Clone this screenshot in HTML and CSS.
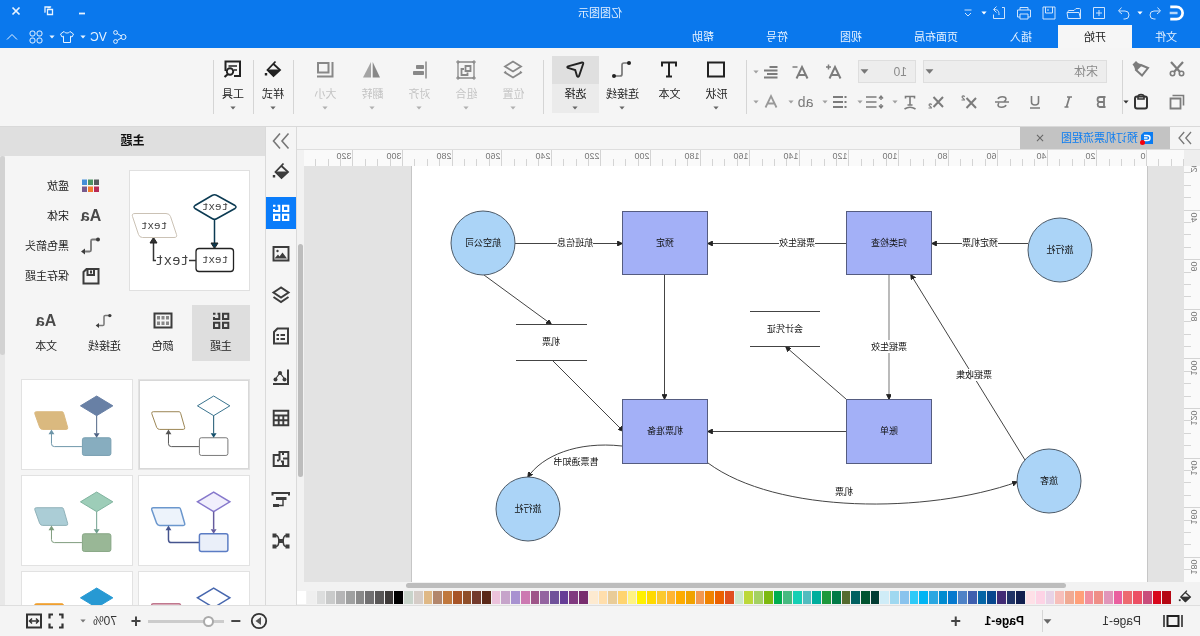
FILE: index.html
```html
<!DOCTYPE html>
<html lang="zh-CN">
<head>
<meta charset="utf-8">
<title>亿图图示</title>
<meta name="viewport" content="width=device-width, initial-scale=1">
<link rel="stylesheet" href="styles.css">
</head>
<body>
<svg class="sprite" aria-hidden="true">
  <symbol id="arrow" viewBox="0 0 8 8"><path d="M0.500 2h7L4 6z" fill="currentColor"/></symbol>
  <symbol id="logo" viewBox="0 0 16 16"><path d="M14 2.500H8.500a5.500 5.500 0 0 0 0 11H14" fill="none" stroke="currentColor" stroke-width="2.400"/><path d="M7.500 8h7" stroke="currentColor" stroke-width="2.200" opacity=".7"/></symbol>
  <symbol id="undo" viewBox="0 0 16 16"><path d="M5.500 2.500 2.500 6l3.500 3M3 6h6a4 4 0 0 1 0 8H7.500"/></symbol>
  <symbol id="redo" viewBox="0 0 16 16"><path d="m10.500 2.500 3 3.500-3.500 3M13 6H7a4 4 0 0 0 0 8h1.500"/></symbol>
  <symbol id="new" viewBox="0 0 16 16"><path d="M2.500 2.500h11v11h-11zM8 5v6M5 8h6"/></symbol>
  <symbol id="open" viewBox="0 0 16 16"><path d="M1.500 13.500v-9q0-1 1-1H6l2 2h5q1 0 1 1v1M1.500 13.500 3 7.500h12l-1 6z"/></symbol>
  <symbol id="save" viewBox="0 0 16 16"><path d="M2 2h12v12H2zM4.500 2v6h7V2M9 4v2"/></symbol>
  <symbol id="print" viewBox="0 0 16 16"><path d="M4 5V2.500h8V5M4 12H1.500V5h13v7H12M4 9h8v5H4z"/></symbol>
  <symbol id="export" viewBox="0 0 16 16"><path d="M5 2.500H2.500v11h11V9.500M8 10c0-4 1-5.500 5-5.500M10.500 1.500l3 3-3 3"/></symbol>
  <symbol id="custom" viewBox="0 0 16 16"><path d="M4.500 5h7M5 8l3 3 3-3"/></symbol>
  <symbol id="share" viewBox="0 0 16 16"><circle cx="4.500" cy="8" r="2.500"/><circle cx="12.500" cy="3.500" r="1.900"/><circle cx="12.500" cy="12.500" r="1.900"/><path d="m6.800 7 4-2.500M6.800 9l4 2.500"/></symbol>
  <symbol id="shirt" viewBox="0 0 16 16"><path d="M5 2.500 1.500 5 3 8l1.500-.8v6.300h7V7.200L13 8l1.500-3L11 2.500c-1 2-5 2-6 0z"/></symbol>
  <symbol id="clover" viewBox="0 0 16 16"><rect x="2" y="2" width="5" height="5" rx="2"/><rect x="9" y="2" width="5" height="5" rx="2"/><rect x="2" y="9" width="5" height="5" rx="2"/><rect x="9" y="9" width="5" height="5" rx="2"/></symbol>
  <symbol id="chev-up" viewBox="0 0 16 16"><path d="m3 10.500 5-5 5 5"/></symbol>
  <symbol id="win-min" viewBox="0 0 16 16"><path d="M5 10.500h6" stroke-width="1.800"/></symbol>
  <symbol id="win-restore" viewBox="0 0 16 16"><path d="M6.500 4.500V4H12v5h-.5M4.500 6.500h5v5h-5zM6.500 4.500h3" stroke-width="1.300"/></symbol>
  <symbol id="win-close" viewBox="0 0 16 16"><path d="m4.500 4.500 7 7M11.500 4.500l-7 7" stroke-width="1.700"/></symbol>
  <symbol id="tab-close" viewBox="0 0 16 16"><path d="m4.500 4.500 7 7M11.500 4.500l-7 7" stroke-width="1.200"/></symbol>

  <symbol id="cut" viewBox="0 0 20 20"><path d="M4 3 13 13M16 3 7 13" stroke-width="2.200"/><circle cx="5.500" cy="14.500" r="2.200" stroke-width="1.600"/><circle cx="14.500" cy="14.500" r="2.200" stroke-width="1.600"/></symbol>
  <symbol id="brush" viewBox="0 0 20 20"><path d="m3 9 7-3 5 5-6 5.500z" stroke-width="2"/><path d="m9.500 5.500 6 6 1.500-4 1.500-2L15 2l-2 2z" fill="currentColor" stroke="none"/></symbol>
  <symbol id="copy" viewBox="0 0 20 20"><path d="M6.500 6.500h10v10h-10z" stroke-width="1.800"/><path d="M3.500 13.500v-10h11" stroke-width="1.600"/></symbol>
  <symbol id="paste" viewBox="0 0 20 20"><rect x="4" y="4.500" width="12" height="12" rx="2" stroke-width="2"/><path d="M7 7V5a3 2.500 0 0 1 6 0v2z" stroke-width="1.600"/></symbol>
  <symbol id="f-bold" viewBox="0 0 20 20"><path d="M7 5h4a2.400 2.400 0 0 1 0 5H7zM7 10h4.500a2.600 2.600 0 0 1 0 5H7zM5.500 5h2M5.500 15h2" stroke-width="1.800"/></symbol>
  <symbol id="f-italic" viewBox="0 0 20 20"><path d="M6 5h5M9.500 15h4M8.500 5l3 10" stroke-width="1.700"/></symbol>
  <symbol id="f-under" viewBox="0 0 20 20"><path d="M6.500 4v6a3.500 3 0 0 0 7 0V4M5 16h10" stroke-width="1.600"/></symbol>
  <symbol id="f-strike" viewBox="0 0 20 20"><path d="M14 7c-1-3-8-3-8 0 0 1.200 1 2 2 2.500M6 13c1 3 8 3 8 0 0-1-.4-1.500-1-2M3 10h14" stroke-width="1.500"/></symbol>
  <symbol id="f-sup" viewBox="0 0 20 20"><path d="m3 6 9.500 10M12.500 6 3 16" stroke-width="2"/><path d="M14.500 5c.4-1.500 2.500-1.400 2.500 0 0 1-2.500 1.500-2.500 3H17.500" stroke-width="1.100"/></symbol>
  <symbol id="f-sub" viewBox="0 0 20 20"><path d="m3 5 9.500 10M12.500 5 3 15" stroke-width="2"/><path d="M14.500 13c.4-1.500 2.500-1.400 2.500 0 0 1-2.500 1.500-2.500 3H17.500" stroke-width="1.100"/></symbol>
  <symbol id="f-path" viewBox="0 0 20 20"><path d="M5.500 6.500v-2h9v2M10 4.500V13M7.500 13h5M4.500 17q5.500-3.500 11 0" stroke-width="1.600"/></symbol>
  <symbol id="f-line" viewBox="0 0 20 20"><path d="M8.500 5H19M8.500 10H19M8.500 15H19" stroke-width="1.700"/><path d="M4 5v3M4 12v3M2 6.500 4 4l2 2.500M2 13.500 4 16l2-2.500" stroke-width="1.400"/></symbol>
  <symbol id="f-list" viewBox="0 0 20 20"><path d="M7 5H17M7 10H17M7 15H17" stroke-width="1.800"/><path d="M3.500 5h2M3.500 10h2M3.500 15h2" stroke-width="1.800"/></symbol>
  <symbol id="f-color" viewBox="0 0 20 20"><path d="M4.500 15.500 10 4l5.500 11.500M6.500 11.500h7" stroke-width="1.800"/></symbol>
  <symbol id="f-big" viewBox="0 0 20 20"><path d="M3.500 16.500 9 5l5.500 11.500M5.500 13h7" stroke-width="2"/><path d="M15.500 2.500v5M13 5h5" stroke-width="1.500"/></symbol>
  <symbol id="f-small" viewBox="0 0 20 20"><path d="M3.500 16.500 9 5l5.500 11.500M5.500 13h7" stroke-width="2"/><path d="M13.500 5h5" stroke-width="1.500"/></symbol>
  <symbol id="f-align" viewBox="0 0 20 20"><path d="M3.500 5H11.500M3.500 8.500H17M3.500 12H14M3.500 15.500H17" stroke-width="1.800"/></symbol>

  <symbol id="r-shape" viewBox="0 0 24 24"><path d="M4 4.500h16v14H4z" stroke-width="2"/></symbol>
  <symbol id="r-text" viewBox="0 0 24 24"><path d="M5 8.500v-4h14v4M12 4.500v14M9 18.500h6" stroke-width="2"/></symbol>
  <symbol id="r-conn" viewBox="0 0 24 24"><path d="M5 5h5q2 0 2 2v9q0 2 2 2h5" stroke="#777" stroke-width="1.700"/><circle cx="5" cy="5" r="2" fill="currentColor" stroke="none"/><circle cx="20" cy="18" r="2" fill="currentColor" stroke="none"/></symbol>
  <symbol id="r-arrowconn" viewBox="0 0 24 24"><path d="M5 5.500h5.500a1.500 1.500 0 0 1 1.500 1.500v9a1.500 1.500 0 0 0 1.500 1.500H19" stroke="#777" stroke-width="1.800"/><circle cx="5" cy="5.500" r="2" fill="currentColor" stroke="none"/><path d="m18 14.500 4 3-4 3z" fill="currentColor" stroke="none"/></symbol>
  <symbol id="r-select" viewBox="0 0 24 24"><path d="M5 4.500q-1.500-.2-1.200 1.200L8 18q1 1.500 2 0l1.800-6L19 10q1.500-1 0-1.700z" stroke-width="1.900"/></symbol>
  <symbol id="r-layers" viewBox="0 0 24 24"><path d="m12 3.500 8 5-8 5-8-5zM5 13.500l-1 1 8 5 8-5-1-1" stroke-width="1.800"/></symbol>
  <symbol id="r-group" viewBox="0 0 24 24"><path d="M4 4h16v16H4z" stroke-width="1.300"/><path d="M7.500 8h5v5h-5zM14 11h2.500v6h-6V14.500" stroke-width="1.800"/><path d="M3 3h2v2H3zM19 3h2v2h-2zM3 19h2v2H3zM19 19h2v2h-2z" stroke-width="1"/></symbol>
  <symbol id="r-aligned" viewBox="0 0 24 24"><path d="M5 3.500v17" stroke-width="1.500"/><path d="M7.500 7.500h7v3h-7zM7.500 13.500h10v3h-10z" fill="currentColor"/></symbol>
  <symbol id="r-flip" viewBox="0 0 24 24"><path d="M11.300 4v15.500H4z" fill="currentColor" stroke="none"/><path d="M13 4v15.500h8z" fill="currentColor" opacity=".75" stroke="none"/></symbol>
  <symbol id="r-size" viewBox="0 0 24 24"><path d="M8.500 5h10.500v9.500H8.500z" stroke-width="2"/><path d="M4.500 4v14.500H20" stroke-width="2"/></symbol>
  <symbol id="r-bucket" viewBox="0 0 24 24"><path d="M9.500 3.500 17.500 12l-6 6L5 12l6.500-6" stroke-width="1.800"/><path d="M5 12h12.500l-6 6.500z" fill="currentColor"/><path d="M19 15v2.500" stroke-width="2.400"/></symbol>
  <symbol id="r-tools" viewBox="0 0 24 24"><path d="M11 18H5V3.500h14.500V13" stroke-width="2"/><path d="M8 8h8.500M8 12h3" stroke-width="1.500"/><circle cx="15" cy="13.500" r="3.200" stroke-width="1.900"/><path d="m17 16 3.500 3" stroke-width="2.200"/></symbol>

  <symbol id="s-grid" viewBox="0 0 20 20"><path d="M2.700 2.700h5.300v5.300H2.700zM2.700 11.700h5.300V17H2.700zM11.700 11.700H17V17h-5.300zM13.500 2.700h-1.800v5.300H17V6M15.500 2.700h2.500" stroke-width="2"/></symbol>
  <symbol id="s-image" viewBox="0 0 20 20"><path d="M2.500 3h15v13.500h-15z" stroke-width="1.900"/><path d="m4 14.500 4.500-6 3 4 1.500-2 3.500 4z" fill="currentColor" stroke="none"/><circle cx="13.500" cy="7" r="1.200" fill="currentColor" stroke="none"/></symbol>
  <symbol id="s-layers" viewBox="0 0 20 20"><path d="m10 2.500 7.500 5L10 12.500l-7.500-5zM2.500 12 10 17l7.500-5" stroke-width="2"/></symbol>
  <symbol id="s-doc" viewBox="0 0 20 20"><path d="M3 2.500h10.500L17 6v11.500H3z" stroke-width="2"/><path d="M6 9h4.500M12 9h2.500M6 13h4.500M12 13h2.500" stroke-width="1.800"/></symbol>
  <symbol id="s-chart" viewBox="0 0 20 20"><path d="M3 2.500V17h15" stroke-width="2"/><path d="M6 12.500 11 6l5 6.500" stroke-width="1.200"/><circle cx="11" cy="6" r="2.100" fill="currentColor" stroke="none"/><circle cx="6.500" cy="12.500" r="2" fill="currentColor" stroke="none"/><circle cx="15.500" cy="12.500" r="2" fill="currentColor" stroke="none"/></symbol>
  <symbol id="s-table" viewBox="0 0 20 20"><path d="M2.700 2.700h14.600v14.600H2.700zM3 7.500h14M3 12.300h14M7.700 7.500V17M12.300 7.500V17" stroke-width="1.900"/></symbol>
  <symbol id="s-plan" viewBox="0 0 20 20"><path d="M2.700 3h8.800v3h5.800v11H2.700zM3 9.500h5M8 3v3M11.500 6v5.500M12 11.500h2M8 17v-4.500h2" stroke-width="2"/></symbol>
  <symbol id="s-gantt" viewBox="0 0 20 20"><path d="M2 5.500V3h16.500v2.500" stroke-width="2"/><path d="M4.500 8.500H15M12 15.500h6" stroke-width="3"/><path d="M8 9v6.500h4" stroke-width="1.400"/></symbol>
  <symbol id="s-mind" viewBox="0 0 20 20"><path d="M1.500 4.500h4M1.500 15.500h4M14.500 4.500h4M14.500 15.500h4M7.500 10h5" stroke-width="4"/><path d="M5 4.500c4 0 3.500 11 0 11M15 4.500c-4 0-3.500 11 0 11" stroke-width="1.500"/></symbol>
  <symbol id="s-palette" viewBox="0 0 20 20"><path d="M1.500 2.500h17v14h-17z" stroke-width="2"/><path d="M4 5h3v3.500H4zM8.500 5h3v3.500h-3zM13 5h3v3.500h-3zM4 10.500h3V14H4zM8.500 10.500h3V14h-3zM13 10.500h3V14h-3z" fill="#888" stroke="none"/></symbol>
  <symbol id="s-save" viewBox="0 0 24 24"><path d="M4.500 5h12L19.500 8v11.500h-15zM9 5v6h6.500V5M12 6.500v3" stroke-width="2"/></symbol>
  <symbol id="collapse" viewBox="0 0 20 20"><path d="m2.500 2.500 6.500 7.500-6.500 7.500M11 2.500l6.500 7.500-6.500 7.500" stroke-width="1.600"/></symbol>
  <symbol id="b-pages" viewBox="0 0 20 20"><path d="M4.500 5h11v10h-11z" stroke-width="2"/><path d="M1 4v12M19 4v12" stroke-width="1.500"/></symbol>
  <symbol id="b-play" viewBox="0 0 20 20"><circle cx="10" cy="10" r="7.200" stroke-width="1.800"/><path d="m8 6 5.500 4L8 14z" fill="#555" stroke="none"/></symbol>
  <symbol id="b-full" viewBox="0 0 20 20"><path d="M3.500 7.500v-4H7M13 3.500h3.500v4M16.500 12.500v4H13M7 16.500H3.500v-4" stroke-width="2.200"/></symbol>
  <symbol id="b-fit" viewBox="0 0 20 20"><path d="M3 3.500h14v13H3z" stroke-width="2"/><path d="M6 10h8M8 7.500 5.500 10 8 12.500M12 7.500l2.500 2.500-2.500 2.500" stroke-width="1.500"/></symbol>

  <symbol id="theme" viewBox="0 0 112 92">
    <path class="t-diamond" d="m36 17 16.500 10-16.500 10-16.500-10z"/>
    <path class="t-para" d="M71 33h26.500q2 0 1.500 2L94 49q-1 2-3 2H67q-2 0-1.500-2l4-14q.5-2 1.500-2z"/>
    <rect class="t-box" x="21.500" y="59.500" width="29" height="18" rx="2"/>
    <path class="t-line1" d="M36 37v18"/><path class="t-head1" d="M33 55h6L36 59.500z"/>
    <path class="t-line2" d="M51 68.500h28q3 0 3-3V55"/><path class="t-head2" d="M79 56h6L82 51z"/>
  </symbol>
</svg>

<div class="app">
  <header class="top">
    <div class="titlebar">
      <div class="lead">
        <svg class="logo"><use href="#logo"/></svg>
        <button class="qb" aria-label="撤销"><svg class="i16"><use href="#undo"/></svg></button>
        <button class="qa" aria-label="撤销列表"><svg class="arr"><use href="#arrow"/></svg></button>
        <button class="qb" aria-label="重做"><svg class="i16"><use href="#redo"/></svg></button>
        <button class="qb" aria-label="新建"><svg class="i16"><use href="#new"/></svg></button>
        <button class="qb" aria-label="打开"><svg class="i16"><use href="#open"/></svg></button>
        <button class="qb" aria-label="保存"><svg class="i16"><use href="#save"/></svg></button>
        <button class="qb" aria-label="打印"><svg class="i16"><use href="#print"/></svg></button>
        <button class="qb" aria-label="导出"><svg class="i16"><use href="#export"/></svg></button>
        <button class="qa" aria-label="导出选项"><svg class="arr"><use href="#arrow"/></svg></button>
        <button class="qb" aria-label="自定义"><svg class="i16"><use href="#custom"/></svg></button>
      </div>
      <h1 class="title">亿图图示</h1>
      <div class="window">
        <button class="wb" aria-label="最小化"><svg class="i16"><use href="#win-min"/></svg></button>
        <button class="wb" aria-label="还原"><svg class="i16"><use href="#win-restore"/></svg></button>
        <button class="wb" aria-label="关闭"><svg class="i16"><use href="#win-close"/></svg></button>
      </div>
    </div>
    <nav class="menubar">
      <button class="menu file">文件</button><button class="menu active">开始</button><button class="menu">插入</button><button class="menu">页面布局</button><button class="menu">视图</button><button class="menu">符号</button><button class="menu">帮助</button>
      <div class="account">
        <button aria-label="分享"><svg class="i16"><use href="#share"/></svg></button>
        <button class="vc">VC<svg class="arr"><use href="#arrow"/></svg></button>
        <button aria-label="皮肤"><svg class="i16"><use href="#shirt"/></svg><svg class="arr"><use href="#arrow"/></svg></button>
        <button aria-label="应用"><svg class="i16"><use href="#clover"/></svg></button>
        <button class="hide" aria-label="收起"><svg class="i16"><use href="#chev-up"/></svg></button>
      </div>
    </nav>
  </header>

  <div class="ribbon">
    <div class="group clip">
      <button aria-label="剪切"><svg class="i20"><use href="#cut"/></svg></button>
      <button aria-label="格式刷"><svg class="i20"><use href="#brush"/></svg></button>
      <button aria-label="复制"><svg class="i20"><use href="#copy"/></svg></button>
      <button class="dark" aria-label="粘贴"><svg class="i20"><use href="#paste"/></svg><svg class="arr"><use href="#arrow"/></svg></button>
    </div>
    <div class="group font">
      <div class="row first">
        <div class="pick family"><select aria-label="字体"><option>宋体</option></select><svg class="arr big"><use href="#arrow"/></svg></div>
        <div class="pick size"><select aria-label="字号"><option>10</option></select><svg class="arr big"><use href="#arrow"/></svg></div>
        <button class="fb" aria-label="增大字号"><svg class="i20"><use href="#f-big"/></svg></button>
        <button class="fb" aria-label="减小字号"><svg class="i20"><use href="#f-small"/></svg></button>
        <button class="split last" aria-label="对齐方式"><svg class="i20"><use href="#f-align"/></svg><svg class="arr"><use href="#arrow"/></svg></button>
      </div>
      <div class="row">
        <button class="fb" aria-label="粗体"><svg class="i20"><use href="#f-bold"/></svg></button>
        <button class="fb" aria-label="斜体"><svg class="i20"><use href="#f-italic"/></svg></button>
        <button class="fb" aria-label="下划线"><svg class="i20"><use href="#f-under"/></svg></button>
        <button class="fb" aria-label="删除线"><svg class="i20"><use href="#f-strike"/></svg></button>
        <button class="fb" aria-label="上标"><svg class="i20"><use href="#f-sup"/></svg></button>
        <button class="fb" aria-label="下标"><svg class="i20"><use href="#f-sub"/></svg></button>
        <button class="split" aria-label="文本路径"><svg class="i20"><use href="#f-path"/></svg><svg class="arr"><use href="#arrow"/></svg></button>
        <button class="split" aria-label="行距"><svg class="i20"><use href="#f-line"/></svg><svg class="arr"><use href="#arrow"/></svg></button>
        <button class="split" aria-label="项目符号"><svg class="i20"><use href="#f-list"/></svg><svg class="arr"><use href="#arrow"/></svg></button>
        <button class="split"><span class="ab">ab</span><svg class="arr"><use href="#arrow"/></svg></button>
        <button class="split light" aria-label="字体颜色"><svg class="i20"><use href="#f-color"/></svg><svg class="arr"><use href="#arrow"/></svg></button>
      </div>
    </div>
    <div class="group tools">
      <button class="tool"><svg class="i24"><use href="#r-shape"/></svg>形状<svg class="arr"><use href="#arrow"/></svg></button>
      <button class="tool"><svg class="i24"><use href="#r-text"/></svg>文本</button>
      <button class="tool"><svg class="i24"><use href="#r-conn"/></svg>连接线<svg class="arr"><use href="#arrow"/></svg></button>
      <button class="tool on"><svg class="i24"><use href="#r-select"/></svg>选择<svg class="arr"><use href="#arrow"/></svg></button>
    </div>
    <div class="group tools off">
      <button class="tool"><svg class="i24"><use href="#r-layers"/></svg>位置<svg class="arr"><use href="#arrow"/></svg></button>
      <button class="tool"><svg class="i24"><use href="#r-group"/></svg>组合<svg class="arr"><use href="#arrow"/></svg></button>
      <button class="tool"><svg class="i24"><use href="#r-aligned"/></svg>对齐<svg class="arr"><use href="#arrow"/></svg></button>
      <button class="tool"><svg class="i24"><use href="#r-flip"/></svg>翻转<svg class="arr"><use href="#arrow"/></svg></button>
      <button class="tool"><svg class="i24"><use href="#r-size"/></svg>大小<svg class="arr"><use href="#arrow"/></svg></button>
    </div>
    <div class="group single"><button class="tool"><svg class="i24"><use href="#r-bucket"/></svg>样式<svg class="arr"><use href="#arrow"/></svg></button></div>
    <div class="group single"><button class="tool"><svg class="i24"><use href="#r-tools"/></svg>工具<svg class="arr"><use href="#arrow"/></svg></button></div>
  </div>

  <div class="body">
    <main class="main">
      <div class="tabs">
        <button class="fold" aria-label="展开"><svg class="i16"><use href="#collapse"/></svg></button>
        <div class="doc">
          <svg class="docicon" viewBox="0 0 14 14"><path d="M1 1h9l3 3v9H1z" fill="#0a7cf2"/><path d="M10 4.500H6.500a2.500 2.500 0 0 0 0 5H10M6.500 7H10" fill="none" stroke="#fff" stroke-width="1.400"/><circle cx="11.500" cy="11.500" r="2.500" fill="#f5000c"/></svg>
          <a href="#doc">预订机票流程图</a>
          <button class="close" aria-label="关闭"><svg class="i14"><use href="#tab-close"/></svg></button>
        </div>
      </div>
      <div class="work">
        <div class="corner"></div>
        <svg class="ruler-h" id="rulerH"></svg>
        <svg class="ruler-v" id="rulerV"></svg>
        <div class="canvas">
          <svg class="page" id="doc">
            <defs>
              <marker id="tip" viewBox="0 0 6 6" refX="5.500" refY="3" markerWidth="5" markerHeight="5" markerUnits="userSpaceOnUse" orient="auto"><path d="M0 0l6 3-6 3z" fill="#222"/></marker>
            </defs>
            <g class="edge">
              <path d="M119 77.500H215"/><path d="M300 77.500H439"/><path d="M632 77.500H525"/>
              <path class="soft" d="M258 108V233"/><path d="M482.500 108V233"/><path d="M300 265.500H439"/>
              <path d="M301 233 361 181"/><path d="M122 294 236 109"/>
              <path d="M663 109 596 158"/><path d="M595 194 524 265"/>
              <path d="M525 280C570 275 605 290 619 311"/><path d="M439 297C370 348 220 348 130 316"/>
            </g>
            <g class="store"><path d="M327 145.500h70M327 180.500h70M560 158.500h71M560 194.500h71"/></g>
            <g class="proc">
              <rect x="215.500" y="45.500" width="85" height="63"/><rect x="439.500" y="45.500" width="85" height="63"/>
              <rect x="215.500" y="233.500" width="85" height="64"/><rect x="439.500" y="233.500" width="85" height="64"/>
            </g>
            <g class="ent">
              <circle cx="87" cy="84" r="32"/><circle cx="664" cy="77" r="32"/><circle cx="98" cy="315" r="32"/><circle cx="619" cy="343" r="32"/>
            </g>
            <g class="gap">
              <rect x="149" y="71" width="36" height="13"/><rect x="332" y="71" width="36" height="13"/><rect x="554" y="71" width="36" height="13"/>
              <rect x="240" y="174" width="36" height="13"/><rect x="155" y="203" width="36" height="12"/>
            </g>
            <g class="lab">
              <text x="87" y="87">旅行社</text><text x="258" y="80">归类检查</text><text x="482" y="80">预定</text><text x="664" y="80">航空公司</text>
              <text x="258" y="268">账单</text><text x="482" y="268">机票准备</text><text x="98" y="318">旅客</text><text x="619" y="346">旅行社</text>
              <text x="167" y="80">预定机票</text><text x="350" y="80">票据生效</text><text x="572" y="80">航班信息</text>
              <text x="258" y="184">票据生效</text><text x="173" y="212">票据收集</text><text x="362" y="166">会计凭证</text>
              <text x="596" y="179">机票</text><text x="571" y="299">售票通知书</text><text x="303" y="329">机票</text>
            </g>
          </svg>
        </div>
        <div class="vbar"><div class="vthumb"></div></div>
      </div>
      <div class="hbar"><div class="hthumb"></div></div>
      <div class="colors"><svg class="bucket"><use href="#r-bucket"/></svg><div class="swatches" id="swatches"></div></div>
    </main>

    <nav class="side">
      <button class="sidefold" aria-label="收起面板"><svg class="i20"><use href="#collapse"/></svg></button>
      <button aria-label="样式"><svg class="i24"><use href="#r-bucket"/></svg></button>
      <button class="on" aria-label="主题"><svg class="i20"><use href="#s-grid"/></svg></button>
      <button aria-label="图片"><svg class="i20"><use href="#s-image"/></svg></button>
      <button aria-label="图层"><svg class="i20"><use href="#s-layers"/></svg></button>
      <button aria-label="属性"><svg class="i20"><use href="#s-doc"/></svg></button>
      <button aria-label="图表"><svg class="i20"><use href="#s-chart"/></svg></button>
      <button aria-label="表格"><svg class="i20"><use href="#s-table"/></svg></button>
      <button aria-label="平面图"><svg class="i20"><use href="#s-plan"/></svg></button>
      <button aria-label="甘特图"><svg class="i20"><use href="#s-gantt"/></svg></button>
      <button aria-label="思维导图"><svg class="i20"><use href="#s-mind"/></svg></button>
    </nav>

    <aside class="panel">
      <h2>主题</h2>
      <div class="scroll">
        <div class="content">
          <div class="current">
            <svg class="preview" viewBox="0 0 119 119">
              <path d="M32 24.500q2.500-1.500 5 0l17 10q2 1.500 0 3L37 47.500q-2.500 1.500-5 0L14 37.500q-2-1.500 0-3z" fill="none" stroke="#0b3a52" stroke-width="1.500"/>
              <path d="M34.500 49V73" stroke="#0b3a52" stroke-width="1.500"/><path d="M31 72h7l-3.500 5.500z" fill="#0b3a52"/>
              <rect x="15.500" y="77.500" width="37.500" height="23" rx="3" fill="none" stroke="#222" stroke-width="1.300"/>
              <path d="M53 89.500h7M93 89.500h2.500V71" fill="none" stroke="#333" stroke-width="1.500"/><path d="M92 72h7l-3.500-5.500z" fill="#333"/>
              <path d="M83 42.500h31q3.500 0 2.500 3l-6 18q-1 3-4 3H75q-3.500 0-2.500-3l6-18q1-3 4.500-3z" fill="none" stroke="#cbc2b5"/>
              <g class="mono"><text x="34" y="39">text</text><text x="34" y="92">text</text><text x="95" y="58">text</text><text class="large" x="77" y="94">text</text></g>
            </svg>
            <div class="options">
              <button><svg class="i24" viewBox="0 0 24 24"><g stroke="none"><path d="M4 5.500h5V11H4z" fill="#575b5d"/><path d="M10 5.500h5V11h-5z" fill="#4c9463"/><path d="M16 5.500h5V11h-5z" fill="#448ed8"/><path d="M4 12.500h5V18H4z" fill="#b92a55"/><path d="M10 12.500h5V18h-5z" fill="#f47a2c"/><path d="M16 12.500h5V18h-5z" fill="#775a8d"/></g></svg>盛放</button>
              <button><span class="aa">Aa</span>宋体</button>
              <button><svg class="i24"><use href="#r-arrowconn"/></svg>黑色箭头</button>
              <button><svg class="i24"><use href="#s-save"/></svg>保存主题</button>
            </div>
          </div>
          <div class="kinds">
            <button class="on"><svg class="i20"><use href="#s-grid"/></svg>主题</button>
            <button><svg class="i20"><use href="#s-palette"/></svg>颜色</button>
            <button><svg class="i24"><use href="#r-arrowconn"/></svg>连接线</button>
            <button><span class="aa">Aa</span>文本</button>
          </div>
          <div class="themes">
            <button class="th plain on" aria-label="主题一"><svg><use href="#theme"/></svg></button>
            <button class="th slate" aria-label="主题二"><svg><use href="#theme"/></svg></button>
            <button class="th violet" aria-label="主题三"><svg><use href="#theme"/></svg></button>
            <button class="th sage" aria-label="主题四"><svg><use href="#theme"/></svg></button>
            <button class="th navy" aria-label="主题五"><svg><use href="#theme"/></svg></button>
            <button class="th bright" aria-label="主题六"><svg><use href="#theme"/></svg></button>
          </div>
        </div>
        <div class="track"><div class="thumb"></div></div>
      </div>
    </aside>
  </div>

  <footer class="status">
    <button class="pages" aria-label="页面视图"><svg class="i20"><use href="#b-pages"/></svg></button>
    <button class="pagepick"><span>Page-1</span><svg class="arr big"><use href="#arrow"/></svg></button>
    <button class="pagetab">Page-1</button>
    <button class="sign" aria-label="添加页面">+</button>
    <div class="zoom">
      <button aria-label="播放"><svg class="i20"><use href="#b-play"/></svg></button>
      <button class="sign" aria-label="缩小">−</button>
      <input type="range" min="0" max="100" value="15" aria-label="缩放">
      <button class="sign" aria-label="放大">+</button>
      <button class="pct">70%<svg class="arr"><use href="#arrow"/></svg></button>
      <button aria-label="全屏"><svg class="i20"><use href="#b-full"/></svg></button>
      <button aria-label="适应宽度"><svg class="i20"><use href="#b-fit"/></svg></button>
    </div>
  </footer>
</div>
<script src="app.js"></script>
</body>
</html>
```
FILE: styles.css
```css
* { box-sizing: border-box; }
body {
  margin: 0;
  font: 11px/16px "Liberation Sans", "Noto Sans CJK SC", sans-serif;
  color: #222;
  background: #f5f5f5;
  overflow: hidden;
}
button, select, input { font: inherit; color: inherit; margin: 0; }
button {
  display: flex; align-items: center; justify-content: center;
  border: 0; padding: 0; background: none; white-space: nowrap;
}
svg { fill: none; stroke: currentColor; flex: none; display: block; }
svg text { stroke: none; fill: currentColor; }
.sprite { position: absolute; width: 0; height: 0; }
.i14 { width: 14px; height: 14px; }
.i16 { width: 16px; height: 16px; }
.i20 { width: 20px; height: 20px; }
.i24 { width: 24px; height: 24px; }
.arr { width: 6px; height: 6px; stroke: none; }
.arr.big { width: 9px; height: 9px; }

/* The whole interface is displayed flipped left to right. */
.app {
  display: grid;
  grid-template-rows: auto auto minmax(0, 1fr) auto;
  height: 100vh;
  transform: scaleX(-1);
}

/* Title bar and menus */
.top { background: #0a78ed; color: #e8f3ff; }
.titlebar { display: grid; grid-template-columns: 1fr auto 1fr; height: 25px; align-items: center; padding-left: 14px; }
.lead { display: flex; align-items: center; color: #cfe4fc; }
.logo { width: 18px; height: 18px; color: #fff; }
.qb { width: 25px; height: 24px; }
.qa { width: 6px; height: 24px; color: #fff; }
.title { margin: 0 14px 0 0; font-size: 11px; font-weight: 400; }
.window { display: flex; justify-content: flex-end; padding-bottom: 3px; }
.wb { width: 33px; height: 22px; }
.menubar { display: flex; height: 23px; }
.menu { padding: 0 26px; }
.menu.file { padding: 0 23px; }
.menu.active { background: #f6f6f6; color: #222; }
.account { display: flex; align-items: center; gap: 5px; margin-left: auto; padding-right: 4px; }
.account button { gap: 4px; }
.account .hide { margin-left: 3px; }
.vc { font-size: 12px; }

/* Ribbon */
.ribbon { display: flex; height: 79px; padding-top: 8px; border-bottom: 1px solid #d9d9d9; color: #7c7c7c; }
.group { position: relative; display: flex; height: 58px; }
.group::after { content: ""; position: absolute; right: 0; top: 4px; bottom: 0; border-right: 1px solid #d5d5d5; }
.clip { display: grid; grid-template-columns: 20px 30px; grid-template-rows: 26px 40px; column-gap: 16px; padding-left: 13px; width: 78px; align-items: center; }
.clip button { justify-content: flex-start; gap: 2px; }
.dark { color: #333; }
.font { flex-direction: column; padding: 4px 0 0 5px; width: 376px; gap: 7px; }
.row { display: flex; width: 371px; height: 23px; align-items: center; }
.row.first { padding-left: 10px; }
.fb { width: 33px; height: 23px; }
.split { width: 35px; height: 23px; justify-content: flex-start; gap: 2px; }
.split .arr { color: #a0a0a0; }
.split.last { margin-left: auto; }
.light { color: #999; }
.ab { width: 20px; font-size: 14px; text-align: center; }
.pick { display: grid; align-items: center; height: 23px; background: #ededed; border: 1px solid #dedede; }
.pick > * { grid-area: 1 / 1; }
.pick select { appearance: none; width: 100%; height: 20px; border: 0; background: none; padding: 0 8px; color: #8a8a8a; font-size: 12px; }
.pick .arr { justify-self: end; margin-right: 1px; pointer-events: none; color: #777; }
.family { width: 184px; margin-right: 7px; }
.size { width: 58px; margin-right: 7px; }
.tools { padding: 0 9px 0 6px; }
.tool { width: 47px; flex-direction: column; justify-content: flex-start; gap: 4px; color: #222; height: 57px; padding-top: 2px; }
.tool .arr { margin-top: -1px; color: #666; }
.tool.on { background: linear-gradient(#dfdfdf 28px, #ebebeb 28px); }
.off .tool { color: #c4c4c4; }
.off .tool .i24 { color: #888; }
.off .tool .arr { color: #b0b0b0; }
.single .tool { width: 40px; }

/* Work area */
.body { display: grid; grid-template-columns: minmax(0, 1fr) 32px 265px; min-height: 0; }
.main { display: grid; grid-template-rows: 22px minmax(0, 1fr) 7px 16px; min-height: 0; }
.tabs { display: flex; }
.fold { width: 30px; color: #777; }
.doc { display: flex; align-items: center; width: 150px; background: #c3c3c3; padding: 0 13px 0 16px; gap: 2px; }
.docicon { width: 14px; height: 14px; stroke: none; }
.doc a { color: #0a7cf2; font-size: 11px; text-decoration: none; white-space: nowrap; }
.close { margin-left: auto; color: #666; }
.work { display: grid; grid-template-columns: 16px minmax(0, 1fr) 7px; grid-template-rows: 16px minmax(0, 1fr); border-top: 1px solid #dedede; min-height: 0; }
.corner { background: #eee; }
.ruler-h, .ruler-v { background: #fafafa; width: 100%; height: 100%; color: #777; font-size: 9px; overflow: hidden; min-height: 0; }
.ruler-h path, .ruler-v path { stroke: #d4d4d4; }
.ruler-h { grid-column: 2; }
.ruler-v { grid-column: 1; grid-row: 2; }
.canvas { grid-column: 2; grid-row: 2; display: flex; background: #e3e3e3; padding: 0 107px 0 36px; min-height: 0; }
.page { flex: 1; height: 100%; background: #fff; border: solid #c6c6c6; border-width: 0 1px; }
.vbar { grid-column: 3; grid-row: 1 / 3; background: #f2f2f2; padding-top: 94px; }
.vthumb { height: 233px; width: 5px; margin-left: 1px; border-radius: 3px; background: #bdbdbd; }
.hbar { background: #f2f2f2; padding: 1px 109px 0 134px; }
.hthumb { height: 5px; border-radius: 3px; background: #bdbdbd; }
.edge path { stroke: #444; marker-end: url(#tip); }
.edge .soft { stroke: #777; }
.store { stroke: #444; }
.proc { fill: #a3b0f7; stroke: #555c80; }
.ent { fill: #abd4f7; stroke: #4c5a68; }
.gap { fill: #fff; stroke: none; }
.lab { font-size: 9px; text-anchor: middle; color: #111; }
.colors { display: flex; align-items: center; background: #f2f2f2; }
.bucket { width: 18px; height: 18px; margin: 0 5px 0 6px; color: #333; }
.swatches { display: flex; flex: 1; height: 13px; gap: 1px; }
.swatches i { flex: 1; }

/* Icon rail */
.side { display: flex; flex-direction: column; align-items: stretch; border: solid #dadada; border-width: 0 1px; color: #3c3c3c; gap: 9px; }
.side button { height: 32px; }
.side .sidefold { height: 20px; margin-top: 4px; margin-bottom: -4px; color: #777; }
.side .on { background: #0a7cfa; color: #fff; }

/* Theme panel */
.panel { display: flex; flex-direction: column; min-height: 0; overflow: hidden; }
.panel h2 { margin: 0; background: #dfdfdf; height: 29px; font-size: 12px; line-height: 29px; text-align: center; color: #111; }
.scroll { display: flex; flex: 1; min-height: 0; }
.content { flex: 1; padding: 14px 12px 0 15px; overflow: hidden; }
.track { width: 5px; background: #e8e8e8; }
.thumb { height: 199px; border-radius: 3px; background: #d2d2d2; }
.current { display: flex; gap: 26px; }
.preview { width: 121px; height: 121px; background: #fff; border: 1px solid #e0e0e0; }
.mono { font: 11px "Liberation Mono", monospace; text-anchor: middle; color: #444; }
.mono .large { font-size: 14px; }
.options { display: grid; grid-auto-rows: 30px; padding-top: 1px; }
.options button { justify-content: flex-start; gap: 10px; }
.options svg { color: #3c3c3c; }
.aa { font-size: 16px; font-weight: 700; color: #4a4a4a; width: 24px; text-align: center; line-height: 20px; }
.kinds { display: grid; grid-template-columns: repeat(4, 1fr); margin-top: 14px; }
.kinds button { flex-direction: column; gap: 7px; height: 56px; padding-bottom: 1px; }
.kinds .i24 { height: 20px; }
.kinds .on { background: #dedede; }
.kinds svg { color: #3c3c3c; }
.themes { display: grid; grid-template-columns: 1fr 1fr; gap: 5px; margin: 18px 4px 0 0; }
.th { background: #fff; border: 1px solid #e2e2e2; height: 91px; }
.th.on { outline: 1px solid #d8d8d8; outline-offset: -2px; }
.th svg { width: 100%; height: 91px; }
.t-diamond { fill: var(--df); stroke: var(--ds); stroke-width: var(--w, 1); }
.t-para { fill: var(--pf); stroke: var(--ps); stroke-width: var(--w, 1); }
.t-box { fill: var(--bf); stroke: var(--bs); stroke-width: var(--w, 1); }
.t-line1 { stroke: var(--l1); stroke-width: var(--w, 1); }
.t-line2 { stroke: var(--l2); stroke-width: var(--w, 1); }
.t-head1 { fill: var(--l1); stroke: none; }
.t-head2 { fill: var(--l2); stroke: none; }
.plain { --df: #fff; --ds: #35708c; --pf: #fff; --ps: #9a8452; --bf: #fff; --bs: #777; --l1: #14506c; --l2: #555; }
.slate { --df: #6880a5; --ds: #6880a5; --pf: #dab97f; --ps: #dab97f; --bf: #87adbf; --bs: #789fb1; --l1: #4d6283; --l2: #6d95a8; }
.violet { --df: #f1effc; --ds: #8678cc; --pf: #edf3fb; --ps: #6b97cd; --bf: #eaeff9; --bs: #5b7cc4; --l1: #655c9e; --l2: #45548e; --w: 1.500; }
.sage { --df: #9dcdb8; --ds: #7fb39e; --pf: #abcdd6; --ps: #8fb0b8; --bf: #99b796; --bs: #86a583; --l1: #6e9e8c; --l2: #7d9b7c; }
.navy { --df: #fff; --ds: #4767ae; --pf: #f2d9e0; --ps: #c0788e; --bf: #fff; --bs: #4767ae; --l1: #4767ae; --l2: #4767ae; --w: 1.500; }
.bright { --df: #2799d3; --ds: #2799d3; --pf: #f0a030; --ps: #f0a030; --bf: #6bb; --bs: #6bb; --l1: #2799d3; --l2: #2799d3; }

/* Status bar */
.status { display: flex; align-items: center; height: 31px; border-top: 1px solid #dedede; background: #f4f4f4; font-size: 12px; }
.pages { margin-left: 17px; width: 20px; }
.pagepick { margin-left: 22px; width: 99px; height: 22px; justify-content: space-between; border-right: 1px solid #d5d5d5; color: #333; }
.pagepick .arr { color: #666; }
.pagetab { font-weight: 700; margin-left: 18px; color: #000; }
.sign { font-size: 18px; font-weight: 700; width: 20px; color: #444; }
.pagetab + .sign { margin-left: 19px; }
.zoom { display: flex; align-items: center; margin-left: auto; padding-right: 23px; color: #333; }
.zoom .i20 { margin: 0 1px; }
.zoom input { appearance: none; width: 76px; height: 12px; background: linear-gradient(#ccc, #ccc) center / 100% 3px no-repeat; }
.zoom .sign { width: 24px; }
.zoom input::-webkit-slider-thumb { appearance: none; width: 11px; height: 11px; border-radius: 50%; background: #fff; border: 2px solid #aaa; }
.pct { gap: 7px; margin: 0 13px 0 7px; }
.pct .arr { color: #777; }
```
FILE: app.js
```js
const NS = "http://www.w3.org/2000/svg";
const STEP = 49.6; // pixels for 20 ruler units

function add(parent, name, attrs, text) {
  const el = document.createElementNS(NS, name);
  for (const key in attrs) el.setAttribute(key, attrs[key]);
  if (text !== undefined) el.textContent = text;
  parent.append(el);
}

const rulerH = document.getElementById("rulerH");
const rulerV = document.getElementById("rulerV");

for (let i = -4; i < 68; i++) {
  const x = Math.round(37 + (i * STEP) / 4) + 0.5;
  const major = i % 4 === 0;
  add(rulerH, "path", { d: `M${x} ${major ? 0 : 9}V16` });
  if (major && i >= 0) add(rulerH, "text", { x: x + 1, y: 9 }, i * 5);
}

for (let i = 0; i < 34; i++) {
  const y = Math.round(-6 + (i * STEP) / 4) + 0.5;
  const major = i % 4 === 0;
  add(rulerV, "path", { d: `M${major ? 0 : 9} ${y}H16` });
  if (major) {
    add(rulerV, "text", { transform: `translate(9 ${y + 2}) rotate(-90)`, "text-anchor": "end" }, 20 + i * 5);
  }
}

const colors = (
  "b50713 d8071c c84d7b ec5064 ed6a70 ea5f9f e196ba ef8e87 f18f9f ffa07a f0aa93 f7bfba e8d3e6 fdd3e5 fee0e7 " +
  "121f4f 203366 422b75 08478e 0565a6 3e5eae 4f82c6 0679ce 008bd0 2aa7e1 00b4f3 2dcaf8 89c3ed 9fd8f0 cfecf7 " +
  "023c33 005430 006060 556b2f 007a46 1d983c 00ae9d 52bcbf 15cfb4 46ba80 00ae50 7db90f a4d162 bcd83a cce8ca " +
  "e0501f eb6100 f08300 f39850 f0a200 fdab00 ffb533 fbc92f ffd900 fff000 fff383 ffd470 e9cc98 ffdeac fdead0 " +
  "782d6e 80397f 663d96 70529a 9464a0 9e5588 cc79b1 a892d0 c6a4ca ecc2dc " +
  "5a2818 733a2c 8f4e29 a75427 c0783d b2866c dfb885 d5ccc7 c9d4cb " +
  "000000 3e3a39 595757 717071 898989 9fa0a0 b5b5b6 c9caca dcdddd efefef ffffff"
).split(" ");

const swatches = document.getElementById("swatches");
for (const color of colors) {
  const chip = document.createElement("i");
  chip.style.background = "#" + color;
  swatches.append(chip);
}
```
